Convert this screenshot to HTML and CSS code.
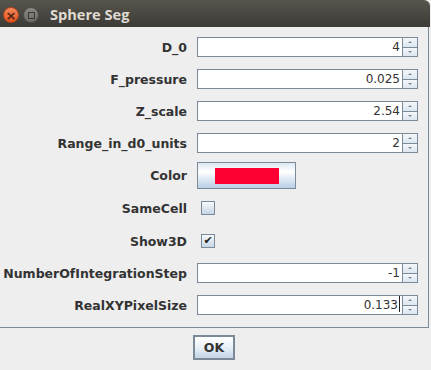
FILE: index.html
```html
<!doctype html>
<html>
<head>
  <link rel="stylesheet" href="styles.css">
</head>
<body>
  <div class="window">
    <div class="titlebar">
      <span class="winbtn close">&#215;</span>
      <span class="winbtn mini"><i></i></span>
      <span class="title">Sphere Seg</span>
    </div>

    <div class="panel">
      <div class="row field-row">
        <label>D_0</label>
        <div class="spinner"><div class="value">4</div><div class="arrows"><b class="up"></b><b class="down"></b></div></div>
      </div>
      <div class="row field-row">
        <label>F_pressure</label>
        <div class="spinner"><div class="value">0.025</div><div class="arrows"><b class="up"></b><b class="down"></b></div></div>
      </div>
      <div class="row field-row">
        <label>Z_scale</label>
        <div class="spinner"><div class="value">2.54</div><div class="arrows"><b class="up"></b><b class="down"></b></div></div>
      </div>
      <div class="row field-row">
        <label>Range_in_d0_units</label>
        <div class="spinner"><div class="value">2</div><div class="arrows"><b class="up"></b><b class="down"></b></div></div>
      </div>
      <div class="row color-row">
        <label>Color</label>
        <div class="colorbtn"><span class="swatch"></span></div>
      </div>
      <div class="row check-row first-check">
        <label>SameCell</label>
        <span class="checkbox"></span>
      </div>
      <div class="row check-row">
        <label>Show3D</label>
        <span class="checkbox checked">&#10004;</span>
      </div>
      <div class="row field-row after-check">
        <label>NumberOfIntegrationStep</label>
        <div class="spinner"><div class="value">-1</div><div class="arrows"><b class="up"></b><b class="down"></b></div></div>
      </div>
      <div class="row field-row">
        <label>RealXYPixelSize</label>
        <div class="spinner"><div class="value">0.133<span class="caret"></span></div><div class="arrows"><b class="up"></b><b class="down"></b></div></div>
      </div>
    </div>

    <div class="buttons">
      <button class="ok">OK</button>
    </div>
  </div>
</body>
</html>
```

FILE: styles.css
```css
body{
  margin: 0;
  background: #ffffff;
  font-family: "DejaVu Sans", sans-serif;
}
.window{
  width: 431px;
  height: 370px;
  background: #eeeeee;
  overflow: hidden;
}
.titlebar{
  height: 27px;
  background-image: linear-gradient(to bottom, #57544c, #3c3b37);
  border-radius: 0 6px 0 0;
  margin-right: 1px;
  display: flex;
  align-items: center;
  padding-left: 3px;
}
.winbtn{
  width: 16px;
  height: 16px;
  border-radius: 50%;
  box-sizing: border-box;
  margin-top: 3px;
  display: flex;
  align-items: center;
  justify-content: center;
}
.close{
  background-image: linear-gradient(to bottom, #f58a5e, #e0501c);
  border: 1px solid #b9431a;
  color: #4a2313;
  font-size: 13px;
  font-weight: bold;
  line-height: 1;
}
.mini{
  margin-left: 4px;
  background-image: linear-gradient(to bottom, #8a8984, #6c6b66);
  border: 1px solid #4f4e4a;
}
.mini i{
  width: 5px;
  height: 5px;
  border: 1px solid #3a3935;
}
.title{
  margin-left: 11px;
  margin-top: 1px;
  color: #dfdbd2;
  font-family: "Open Sans", sans-serif;
  font-weight: bold;
  font-size: 14.6px;
}

.panel{
  width: 428px;
  height: 290px;
  padding-top: 10px;
  border-right: 1px solid #7a8a99;
  border-bottom: 1px solid #7a8a99;
}
.row{
  display: flex;
  align-items: center;
}
.row label{
  width: 187px;
  margin-right: 10px;
  text-align: right;
  font-weight: bold;
  font-size: 12.5px;
  color: #333333;
  white-space: nowrap;
}
.field-row{
  height: 20px;
  margin-bottom: 12px;
}
.spinner{
  display: flex;
  height: 20px;
}
.spinner .value{
  width: 202px;
  height: 18px;
  border: 1px solid #7a8a99;
  border-right: none;
  background: #ffffff;
  text-align: right;
  padding-right: 2px;
  font-size: 12px;
  line-height: 19px;
  color: #333333;
}
.caret{
  display: inline-block;
  width: 1px;
  height: 16px;
  background: #222222;
  vertical-align: -3px;
  margin-left: 1px;
}
.arrows{
  display: flex;
  flex-direction: column;
  width: 16px;
}
.arrows b{
  flex: 1;
  border: 1px solid #7a8a99;
  background-image: linear-gradient(to bottom, #f4f7fa, #dde6ef);
  display: flex;
  align-items: center;
  justify-content: center;
}
.arrows .down{
  border-top: none;
}
.arrows b::after{
  content: "";
  width: 0;
  height: 0;
  border-left: 2px solid transparent;
  border-right: 2px solid transparent;
}
.arrows .up::after{
  border-bottom: 2px solid #7a8a99;
}
.arrows .down::after{
  border-top: 2px solid #7a8a99;
}

.color-row{
  height: 27px;
  margin-top: -3px;
}
.colorbtn{
  width: 97px;
  height: 25px;
  border: 1px solid #7a8a99;
  background-image: linear-gradient(to bottom, #dde8f3 0%, #ffffff 35%, #dde8f3 65%, #b8cfe5 100%);
  display: flex;
  align-items: center;
  justify-content: center;
}
.swatch{
  width: 64px;
  height: 16px;
  background: #ff0033;
}

.check-row{
  height: 14px;
  margin-bottom: 19px;
}
.first-check{
  margin-top: 12px;
}
.check-row label{
  margin-right: 14px;
}
.checkbox{
  width: 12px;
  height: 12px;
  border: 1px solid #7a8a99;
  background-image: linear-gradient(to bottom, #f5f8fb, #c6d6e6);
  font-size: 11px;
  line-height: 12px;
  text-align: center;
  color: #222222;
}
.after-check{
  margin-top: -4px;
}

.buttons{
  display: flex;
  justify-content: center;
  padding-top: 7px;
  padding-right: 3px;
}
.ok{
  width: 42px;
  height: 25px;
  border: 2px solid #7a8a99;
  background-image: linear-gradient(to bottom, #ffffff 0%, #e8f0f7 50%, #c3d5e7 100%);
  font-family: "DejaVu Sans", sans-serif;
  font-weight: bold;
  font-size: 12.5px;
  color: #333333;
  padding: 0;
}
```
